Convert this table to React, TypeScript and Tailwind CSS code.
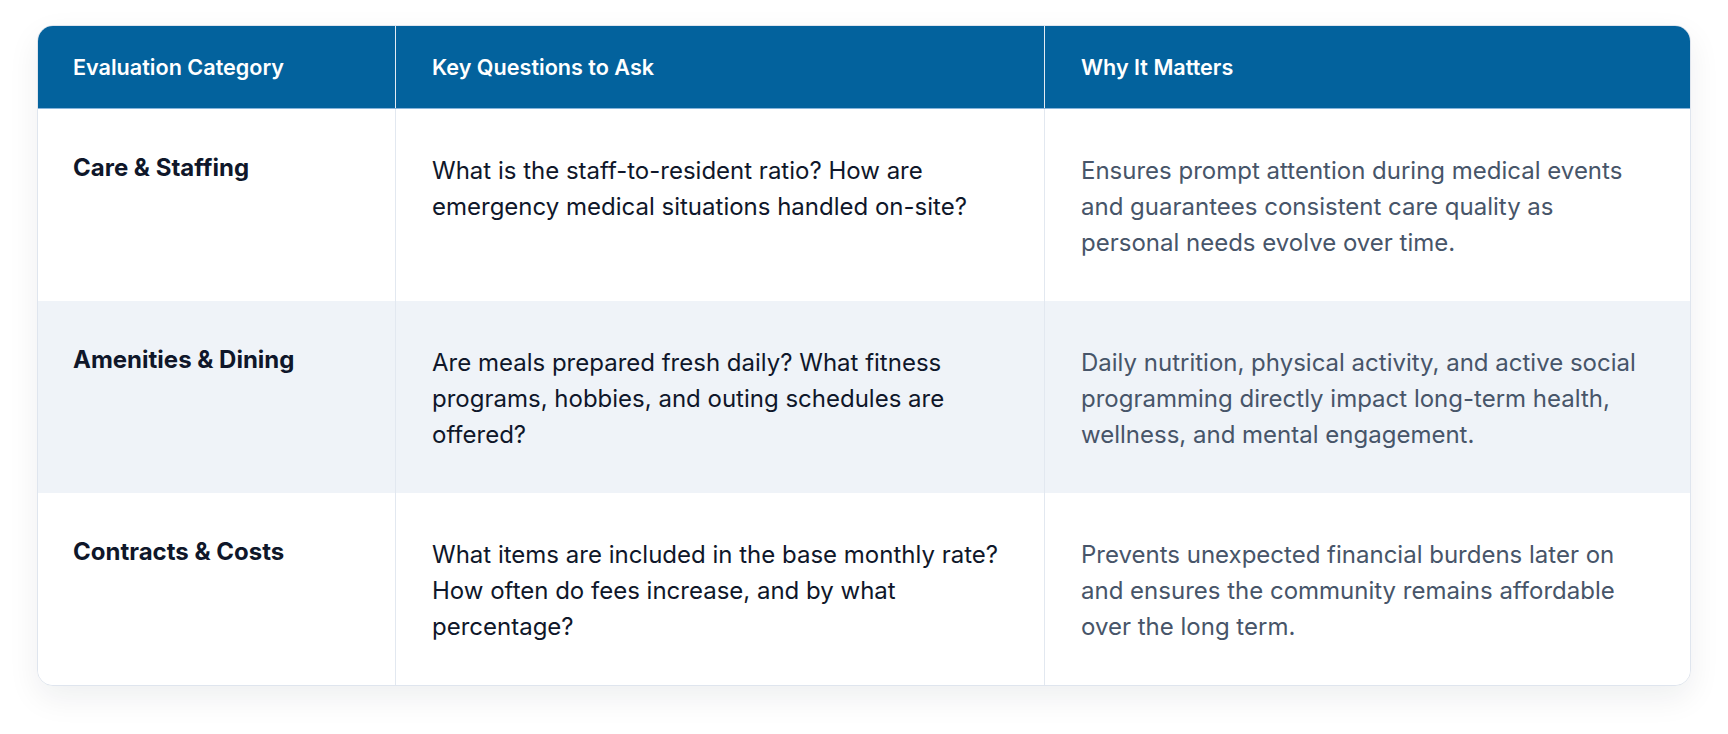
import React from "react";

const rows = [
  {
    cat: "Care & Staffing",
    q: "What is the staff-to-resident ratio? How are emergency medical situations handled on-site?",
    why: "Ensures prompt attention during medical events and guarantees consistent care quality as personal needs evolve over time.",
  },
  {
    cat: "Amenities & Dining",
    q: "Are meals prepared fresh daily? What fitness programs, hobbies, and outing schedules are offered?",
    why: "Daily nutrition, physical activity, and active social programming directly impact long-term health, wellness, and mental engagement.",
  },
  {
    cat: "Contracts & Costs",
    q: "What items are included in the base monthly rate? How often do fees increase, and by what percentage?",
    why: "Prevents unexpected financial burdens later on and ensures the community remains affordable over the long term.",
  },
];

export default function App() {
  return (
    <div className="min-h-[734px] bg-white px-[37px] pt-[25px] pb-[50px] font-['Inter','Noto_Sans',sans-serif]">
      <div className="overflow-hidden rounded-2xl border border-[#dfe5ee] bg-white shadow-[0_12px_32px_rgba(15,23,42,0.07)]">
        <div className="grid grid-cols-[358px_649px_1fr] border-b border-[#86b4db] bg-[#03629d] text-[21.6px] font-semibold text-white">
          <div className="flex h-[82px] items-center border-r border-[#e3ebf3] pl-[35px]">Evaluation Category</div>
          <div className="flex h-[82px] items-center border-r border-[#e3ebf3] pl-[36px]">Key Questions to Ask</div>
          <div className="flex h-[82px] items-center pl-[36px]">Why It Matters</div>
        </div>
        {rows.map((r, i) => (
          <div
            key={r.cat}
            className={`grid grid-cols-[358px_649px_1fr] ${i % 2 === 1 ? "bg-[#eff3f8]" : "bg-white"}`}
          >
            <div className="h-[192px] border-r border-[#e2e8f0] pl-[35px] pr-6 pt-[44px] text-[24px] font-bold leading-[29px] text-[#0f172a]">
              {r.cat}
            </div>
            <div className="h-[192px] border-r border-[#e2e8f0] pl-[36px] pr-8 pt-[44px] text-[24px] leading-[36px] text-[#0f172a]">
              {r.q}
            </div>
            <div className="h-[192px] pl-[36px] pr-12 pt-[44px] text-[24px] leading-[36px] text-[#475569]">
              {r.why}
            </div>
          </div>
        ))}
      </div>
    </div>
  );
}
